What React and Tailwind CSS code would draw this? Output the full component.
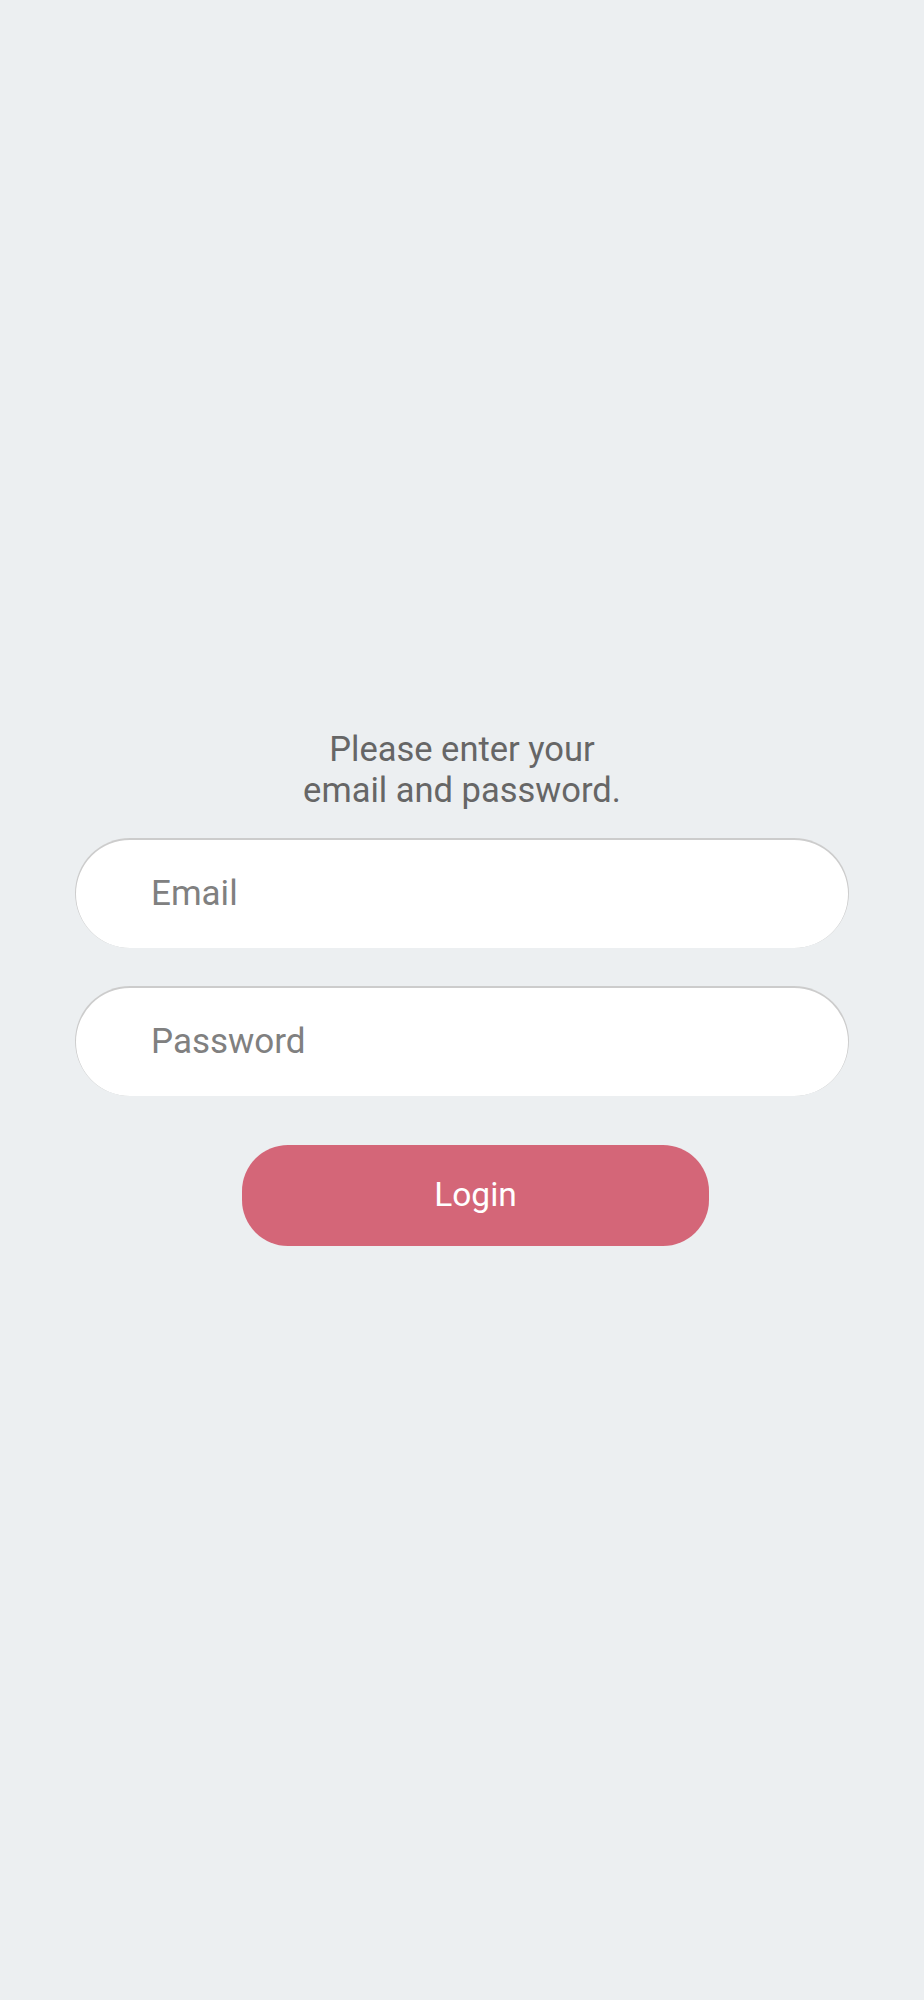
export default function App() {
  return (
    <div
      className="min-h-[2000px] bg-[#eceff1] px-[75px] pt-[729px]"
      style={{ fontFamily: 'Roboto, "Noto Sans", sans-serif' }}
    >
      <p className="text-center text-[34.5px] leading-[41px] text-[#666666]">
        Please enter your
        <br />
        email and password.
      </p>

      <div className="mt-[27px] flex flex-col gap-[38px]">
        <input
          type="email"
          placeholder="Email"
          className="h-[110px] w-full rounded-full bg-white pl-[76px] pr-10 text-[35px] text-[#555] outline-none shadow-[inset_0_1px_0_1px_rgba(0,0,0,0.2)] placeholder:text-[#808080]"
        />
        <input
          type="password"
          placeholder="Password"
          className="h-[110px] w-full rounded-full bg-white pl-[76px] pr-10 text-[35px] text-[#555] outline-none shadow-[inset_0_1px_0_1px_rgba(0,0,0,0.2)] placeholder:text-[#808080]"
        />
      </div>

      <button
        type="button"
        className="ml-[167px] mt-[49px] flex h-[101px] w-[467px] items-center justify-center rounded-[46px] bg-[#d46678] text-[33.5px] text-white"
      >
        Login
      </button>
    </div>
  )
}
